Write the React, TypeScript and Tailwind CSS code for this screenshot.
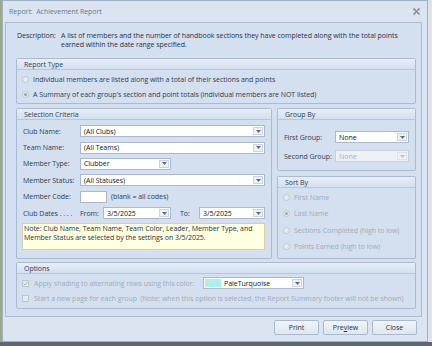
import React from "react";

function Arrow({ light = false }: { light?: boolean }) {
  return (
    <svg width="5" height="3" viewBox="0 0 5 3">
      <path d="M0 0H5L2.5 3Z" fill={light ? "#b7bfca" : "#5f6b7c"} />
    </svg>
  );
}

function Combo({
  className,
  text,
  disabled = false,
  swatch = false,
}: {
  className: string;
  text: string;
  disabled?: boolean;
  swatch?: boolean;
}) {
  return (
    <div
      className={`flex h-[12px] border ${
        disabled
          ? "border-[#c7d0dc] bg-[#eef1f6] text-[#a9b1bd]"
          : "border-[#a9b8cc] bg-white text-[#151515]"
      } ${className}`}
    >
      {swatch && <div className="w-[16px] my-[1px] ml-[1px] bg-[#afeeee]" />}
      <div className="flex-1 flex items-center pl-[3px] leading-none whitespace-nowrap overflow-hidden">
        {text}
      </div>
      <div
        className={`w-[10px] my-[1px] mr-[1px] flex items-center justify-center border ${
          disabled ? "border-[#dbe1e9] bg-[#eef1f6]" : "border-[#c9d4e2] bg-[#edf2f8]"
        }`}
      >
        <Arrow light={disabled} />
      </div>
    </div>
  );
}

function Radio({ checked = false }: { checked?: boolean }) {
  return (
    <span className="w-[7px] h-[7px] rounded-full border border-[#bcc6d3] bg-[#e6ebf2] flex items-center justify-center shrink-0">
      {checked && <span className="w-[3px] h-[3px] rounded-full bg-[#9aa4b2]" />}
    </span>
  );
}

function Check({ checked = false }: { checked?: boolean }) {
  return (
    <span className="w-[7px] h-[7px] border border-[#bcc6d3] bg-[#e6ebf2] flex items-center justify-center shrink-0">
      {checked && (
        <svg width="5" height="5" viewBox="0 0 5 5">
          <path d="M0.5 2.6L2 4L4.6 0.8" stroke="#a3acb9" strokeWidth="0.9" fill="none" />
        </svg>
      )}
    </span>
  );
}

function GroupBox({
  title,
  className,
  bodyClassName,
  children,
}: {
  title: string;
  className: string;
  bodyClassName: string;
  children: React.ReactNode;
}) {
  return (
    <div className={`flex flex-col border border-[#a8bbd4] rounded-[2px] ${className}`}>
      <div className="h-[11px] shrink-0 flex items-center pl-[7px] border-b border-[#b6c7dc] bg-gradient-to-b from-[#e7eef8] to-[#d4e0ef] text-[#263d62]">
        {title}
      </div>
      <div className={bodyClassName}>{children}</div>
    </div>
  );
}

function Btn({ children }: { children: React.ReactNode }) {
  return (
    <div className="w-[45px] h-[15px] flex items-center justify-center border border-[#a9bad0] rounded-[2px] bg-gradient-to-b from-[#f1f5fa] to-[#dde6f2] text-[#26303f]">
      {children}
    </div>
  );
}

export default function App() {
  const label = "w-[57px] shrink-0 text-[#2c3c54]";
  return (
    <div className="w-[432px] h-[346px] flex flex-col bg-[#7d8289] overflow-hidden font-['Open_Sans',sans-serif] text-[7px] leading-[9px] tracking-[-0.04px]">
      <div className="flex h-[342px]">
        <div className="w-[2px] bg-[#9ea78c]" />
        <div className="w-[426px] h-full flex flex-col border border-[#9fb1c9] bg-[#dbe5f2]">
          {/* title bar */}
          <div className="h-[21px] shrink-0 flex items-center justify-between pl-[6px] pr-[7px] text-[#667894]">
            <span>Report:&nbsp; Achievement Report</span>
            <svg width="7" height="7" viewBox="0 0 7 7">
              <path d="M1 1L6 6M6 1L1 6" stroke="#7e8a9c" strokeWidth="1.1" />
              <circle cx="1.2" cy="1.2" r="0.9" fill="none" stroke="#7e8a9c" strokeWidth="0.6" />
              <circle cx="5.8" cy="1.2" r="0.9" fill="none" stroke="#7e8a9c" strokeWidth="0.6" />
              <circle cx="1.2" cy="5.8" r="0.9" fill="none" stroke="#7e8a9c" strokeWidth="0.6" />
              <circle cx="5.8" cy="5.8" r="0.9" fill="none" stroke="#7e8a9c" strokeWidth="0.6" />
            </svg>
          </div>
          {/* main panel */}
          <div className="ml-[2px] w-[417px] flex flex-col border border-[#aabcd4] bg-[#d4e0ef] pl-[10px] pr-[5px] pb-[7px]">
            {/* description */}
            <div className="h-[35px] pt-[7.5px] pl-[1px] flex text-[#25334a]">
              <div className="w-[44px] shrink-0">Description:</div>
              <div>
                A list of members and the number of handbook sections they have completed along with the total points
                <br />
                earned within the date range specified.
              </div>
            </div>
            {/* report type */}
            <GroupBox title="Report Type" className="h-[46px]" bodyClassName="pt-[2px] pl-[5px] flex flex-col">
              <div className="h-[15px] flex items-center gap-[4px] text-[#2c3c54]">
                <Radio />
                <span>Individual members are listed along with a total of their sections and points</span>
              </div>
              <div className="h-[15px] flex items-center gap-[4px] text-[#2c3c54]">
                <Radio checked />
                <span>A Summary of each group's section and point totals (individual members are NOT listed)</span>
              </div>
            </GroupBox>
            {/* middle row */}
            <div className="mt-[4px] flex gap-[5px]">
              <GroupBox title="Selection Criteria" className="w-[256px] h-[151px]" bodyClassName="pt-[3px] flex flex-col">
                <div className="pl-[6px] flex flex-col">
                  <div className="h-[16.4px] flex items-center">
                    <span className={label}>Club Name:</span>
                    <Combo className="w-[185px]" text="(All Clubs)" />
                  </div>
                  <div className="h-[16.4px] flex items-center">
                    <span className={label}>Team Name:</span>
                    <Combo className="w-[185px]" text="(All Teams)" />
                  </div>
                  <div className="h-[16.4px] flex items-center">
                    <span className={label}>Member Type:</span>
                    <Combo className="w-[91px]" text="Clubber" />
                  </div>
                  <div className="h-[16.4px] flex items-center">
                    <span className={label}>Member Status:</span>
                    <Combo className="w-[185px]" text="(All Statuses)" />
                  </div>
                  <div className="h-[16.4px] flex items-center">
                    <span className={label}>Member Code:</span>
                    <div className="w-[27px] h-[12px] border border-[#a9b8cc] bg-white" />
                    <span className="ml-[4px] text-[#2c3c54]">(blank = all codes)</span>
                  </div>
                  <div className="h-[16.4px] flex items-center">
                    <span className={label}>Club Dates . . . .</span>
                    <span className="w-[23px] shrink-0 text-[#2c3c54]">From:</span>
                    <Combo className="w-[68px]" text="3/5/2025" />
                    <span className="w-[28px] shrink-0 pl-[9px] text-[#2c3c54]">To:</span>
                    <Combo className="w-[66px]" text="3/5/2025" />
                  </div>
                </div>
                <div className="mt-[1.6px] ml-[5px] w-[243px] h-[27px] border border-[#cfd0b4] bg-[#ffffe1] pl-[1px] leading-[9.5px] text-[#25334a]">
                  Note: Club Name, Team Name, Team Color, Leader, Member Type, and
                  <br />
                  Member Status are selected by the settings on 3/5/2025.
                </div>
              </GroupBox>
              <div className="w-[139px] flex flex-col gap-[5px]">
                <GroupBox title="Group By" className="h-[63px]" bodyClassName="pt-[11px] pl-[6px] flex flex-col gap-[7px]">
                  <div className="flex items-center">
                    <span className="w-[51px] shrink-0 text-[#2c3c54]">First Group:</span>
                    <Combo className="w-[74px]" text="None" />
                  </div>
                  <div className="flex items-center">
                    <span className="w-[51px] shrink-0 text-[#2c3c54]">Second Group:</span>
                    <Combo className="w-[74px]" text="None" disabled />
                  </div>
                </GroupBox>
                <GroupBox title="Sort By" className="h-[83px]" bodyClassName="pt-[0.75px] pl-[4.5px] flex flex-col text-[#a0aab8]">
                  <div className="h-[16.5px] flex items-center gap-[4.5px]">
                    <Radio />
                    <span>First Name</span>
                  </div>
                  <div className="h-[16.5px] flex items-center gap-[4.5px]">
                    <Radio checked />
                    <span>Last Name</span>
                  </div>
                  <div className="h-[16.5px] flex items-center gap-[4.5px]">
                    <Radio />
                    <span>Sections Completed (high to low)</span>
                  </div>
                  <div className="h-[16.5px] flex items-center gap-[4.5px]">
                    <Radio />
                    <span>Points Earned (high to low)</span>
                  </div>
                </GroupBox>
              </div>
            </div>
            {/* options */}
            <GroupBox title="Options" className="mt-[3px] h-[47px]" bodyClassName="pt-[1.5px] pl-[5px] flex flex-col text-[#a0aab8]">
              <div className="h-[15px] flex items-center">
                <Check checked />
                <span className="w-[174px] pl-[5px] shrink-0">Apply shading to alternating rows using this color:</span>
                <Combo className="w-[101px]" text="PaleTurquoise" swatch />
              </div>
              <div className="h-[15px] flex items-center">
                <Check />
                <span className="pl-[5px] whitespace-pre">
                  {"Start a new page for each group  (Note: when this option is selected, the Report Summary footer will not be shown)"}
                </span>
              </div>
            </GroupBox>
          </div>
          {/* buttons */}
          <div className="mt-[3px] flex justify-end gap-[4px] pr-[10px]">
            <Btn>Print</Btn>
            <Btn>
              <span>
                Pre<span className="underline">v</span>iew
              </span>
            </Btn>
            <Btn>Close</Btn>
          </div>
        </div>
        <div className="flex-1 bg-[#dfe3e8]" />
      </div>
      <div className="flex-1 bg-[#62666d]" />
    </div>
  );
}
